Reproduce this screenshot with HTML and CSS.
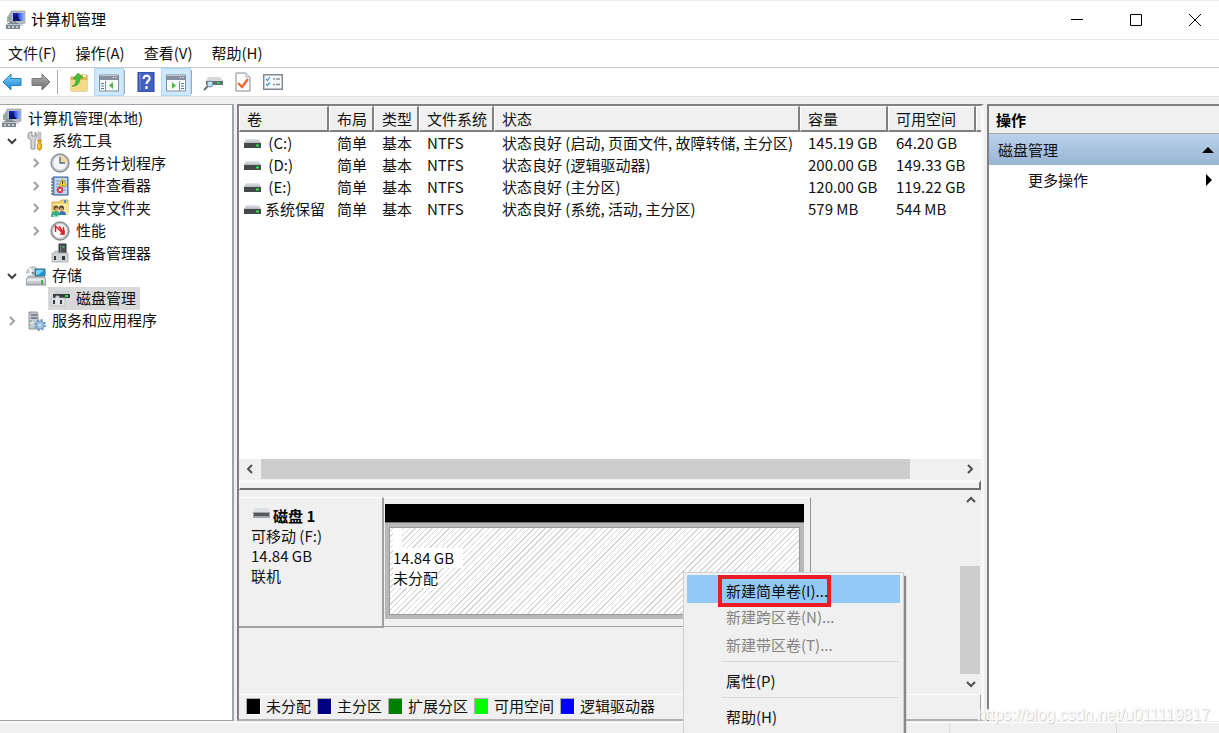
FILE: index.html
```html
<!DOCTYPE html>
<html lang="zh-CN">
<head>
<meta charset="utf-8">
<title>计算机管理</title>
<link rel="stylesheet" href="styles.css">
</head>
<body>
<svg class="defs" aria-hidden="true">
  <defs>
    <linearGradient id="metal" x1="0" y1="0" x2="0" y2="1"><stop offset="0" stop-color="#e4e7ea"/><stop offset="1" stop-color="#b5b9be"/></linearGradient>
    <linearGradient id="screen" x1="0" y1="0" x2="1" y2="0"><stop offset="0" stop-color="#0510a0"/><stop offset=".5" stop-color="#2a48ee"/><stop offset="1" stop-color="#8fb4ff"/></linearGradient>
    <linearGradient id="blue" x1="0" y1="0" x2="0" y2="1"><stop offset="0" stop-color="#7fd0fa"/><stop offset="1" stop-color="#1686d8"/></linearGradient>
    <linearGradient id="gray" x1="0" y1="0" x2="0" y2="1"><stop offset="0" stop-color="#b5b5b5"/><stop offset="1" stop-color="#6a6a6a"/></linearGradient>
    <symbol id="computer" viewBox="0 0 20 20">
      <path d="M1 7l4-5v10H1z" fill="#a6abb0"/><path d="M2 8h2v1H2z" fill="#41c64a"/>
      <path d="M5 1h14v12l-3 1H7l-2-1z" fill="#b9bdc5" stroke="#8b9099" stroke-width=".6"/>
      <path d="M7 3h11v8H7z" fill="url(#screen)"/><path d="M7 11c1-4 3-7 4-8l1 4c1 2 2 3 3 4z" fill="#0b1468"/>
      <path d="M14 14h3v2h-3z" fill="#d6d8dc"/>
      <path d="M0 15l2-2h10l2 2v4H0z" fill="#7b868f"/><path d="M1 14.500h12" stroke="#c3cbd2"/><path d="M2 17h2M6 17h2M10 17h2" stroke="#dfe5ea" stroke-width="1.500"/><path d="M4 13v-1h6v1" fill="none" stroke="#69737b"/>
    </symbol>
    <symbol id="tools" viewBox="0 0 20 20">
      <path d="M4 1L2 3v4l3 2v9h4V9l2-3V3L9 1v4H6V1z" fill="#d4d7d8" stroke="#868b8e" stroke-width=".9"/>
      <path d="M12 1h3v8h-3z" fill="#c5c8ca" stroke="#a0a4a6" stroke-width=".4"/><path d="M11.500 9h4l-1 3 1 1v5c-1 1.500-3 1.500-4 0v-5l1-1z" fill="#f3ab13" stroke="#c98106" stroke-width=".7"/><path d="M13 13v4" stroke="#ffe17d"/>
    </symbol>
    <symbol id="clock" viewBox="0 0 20 20"><circle cx="10" cy="10" r="9.200" fill="#a7abb0" stroke="#73777c" stroke-width=".8"/><circle cx="10" cy="10" r="7.300" fill="#f2f4f5" stroke="#d3d7da"/><path d="M10 10V3a7 7 0 0 1 7 7z" fill="#f6d797"/><path d="M10 4v6h5" fill="none" stroke="#566c89" stroke-width="1.400"/></symbol>
    <symbol id="event" viewBox="0 0 20 20"><path d="M3 1h15v18H3z" fill="#8badd6" stroke="#385d9a"/><path d="M5 2h12v16H5z" fill="#c4d8f1"/><path d="M6 5h10M6 8h10M6 11h10M6 14h10" stroke="#7898c4"/><path d="M1 3h3M1 6h3M1 9h3M1 12h3M1 15h3M1 18h3" stroke="#747b87" stroke-width="1.300"/><path d="M12.500 3l4 7H9z" fill="#ffdc17" stroke="#ca9c00" stroke-width=".7"/><path d="M12.500 5v3M12.500 9v.6" stroke="#322a00" stroke-width=".9"/><circle cx="10" cy="14" r="3.200" fill="#dc3545"/><path d="M8.700 12.700l2.600 2.600M11.300 12.700l-2.600 2.600" stroke="#fff"/></symbol>
    <symbol id="shared" viewBox="0 0 20 20"><path d="M2 4h8l1-2h7v14H2z" fill="#f5d46f" stroke="#c79e35" stroke-width=".8"/><path d="M4 6h14v10H4z" fill="#ffe799"/><path d="M14 2h2v3h-2z" fill="#568bd3"/><circle cx="6" cy="10" r="2.500" fill="#63452c"/><circle cx="11.500" cy="10" r="2.500" fill="#534131"/><circle cx="6.500" cy="11" r="1.500" fill="#d9aa7b"/><circle cx="11.500" cy="11" r="1.500" fill="#d9aa7b"/><path d="M1 19c0-4 2-6 5-6s4 2 4 5z" fill="#2fae82"/><path d="M9 17c0-3 1-4 3-4s4 1 4 4z" fill="#3577ad"/><path d="M3 17l3 2 4-2" fill="none" stroke="#a5e4c5" stroke-width="1.200"/></symbol>
    <symbol id="perf" viewBox="0 0 20 20"><circle cx="10" cy="10" r="9.200" fill="#a7aaac" stroke="#6f7376" stroke-width=".8"/><circle cx="10" cy="10" r="7.400" fill="#fff" stroke="#c5c8ca"/><path d="M5.500 11V5l8 8V6" fill="none" stroke="#dd2024" stroke-width="1.500"/><path d="M9 5l5 8M10 13h4V9" fill="none" stroke="#dd2024" stroke-width="1.500"/></symbol>
    <symbol id="device" viewBox="0 0 20 20"><path d="M9 1h7v10H9z" fill="#505457" stroke="#292c2e"/><path d="M10.500 2v8" stroke="#7b8286"/><path d="M12.500 4h2" stroke="#24da4e" stroke-width="1.600"/><path d="M2 10h3V8h3v2h10v9H2z" fill="#d0d3d4" stroke="#a2a6a8" stroke-width=".8"/><path d="M4 13h2v4H4zM12 13h3v4h-3z" fill="#34383a"/></symbol>
    <symbol id="storage" viewBox="0 0 20 20"><circle cx="7" cy="7" r="6.200" fill="#d3d7d9" stroke="#93989b" stroke-width=".7"/><path d="M7 7L3 2M7 7l5-4M7 7L1 9" stroke="#f8faff" stroke-width="2"/><circle cx="7" cy="7" r="1.500" fill="#888f93"/><path d="M9 3h10v7H9z" fill="#1f98d8" stroke="#376c89"/><path d="M10 4h8l-6 5h-2z" fill="#7dd3f6"/><path d="M0 13l3-2h15l2 2v6H0z" fill="url(#metal)" stroke="#777c80" stroke-width=".8"/><path d="M1 14h17" stroke="#f9fbfc"/><path d="M15 14h2v4h-2z" fill="#39b83d"/></symbol>
    <symbol id="diskmgmt" viewBox="0 0 20 20"><path d="M3 6l3-3h12l2 3z" fill="#cfd2d5"/><path d="M3 6h17v4H3z" fill="#383c3f"/><path d="M15 8h3" stroke="#23df4f" stroke-width="2"/><path d="M1 10h5V8h3v2h6v8H1z" fill="#e1e3e4" stroke="#b8bcbe" stroke-width=".8"/><path d="M3 12h2v4H3zM10 12h2v4h-2z" fill="#34383a"/></symbol>
    <symbol id="services" viewBox="0 0 20 20"><path d="M3 1h8l1 2v15H3z" fill="#c5cbd0" stroke="#7a8288" stroke-width=".8"/><path d="M5 4h6M5 7h6" stroke="#657078" stroke-width="1.500"/><path d="M4 12h7" stroke="#fff"/><path d="M4 10h2" stroke="#43ba4d"/><circle cx="14" cy="14" r="4.800" fill="none" stroke="#6d9cc8" stroke-width="2.400" stroke-dasharray="2 1.770"/><circle cx="14" cy="14" r="4" fill="#a7c8e4" stroke="#6d98bf"/><circle cx="14" cy="14" r="1.500" fill="#fff" stroke="#6d98bf" stroke-width=".6"/></symbol>
    <symbol id="drive" viewBox="0 0 17 10"><path d="M2 0h13l2 4H0z" fill="url(#metal)"/><path d="M0 4h17v5H0z" fill="#454849"/><path d="M12 6.500h3" stroke="#27e54d" stroke-width="2"/></symbol>
    <symbol id="removable" viewBox="0 0 17 10"><path d="M2 0h13l2 4H0z" fill="#dce0e4"/><path d="M0 4h17v6H0z" fill="#a2a5a7"/><path d="M1 6.500h15" stroke="#55585a" stroke-width="3"/></symbol>
    <symbol id="arrow" viewBox="0 0 20 18"><path d="M1 9l8-8v4.500h10v7H9V17z" stroke="currentColor" stroke-linejoin="round"/></symbol>
    <symbol id="up" viewBox="0 0 20 20"><path d="M2 5h6l2-2h8v16H2z" fill="#e7bb54" stroke="#c49636" stroke-width=".8"/><path d="M2 8h16v11H2z" fill="#f5da88"/><path d="M14 4h3" stroke="#fff8cd" stroke-width="2"/><path d="M3 14c3 0 4-3 4-7H4l5-6 5 5h-3c0 5-3 9-8 8z" fill="#44c13b" stroke="#28982b" stroke-width=".6"/></symbol>
    <symbol id="panel-left" viewBox="0 0 20 18"><path d="M.5 1h19v16H.5z" fill="#f8fafc" stroke="#858d99"/><path d="M1 2h18v4H1z" fill="#8790a0"/><path d="M14 3.500h1M16.500 3.500h1" stroke="#fff"/><path d="M6.500 7v10" stroke="#858d99"/><path d="M2 9.500h3M2 12h3M2 14.500h3" stroke="#417bb7"/><path d="M14 8v7l-4-3.500z" fill="#4fb93e"/></symbol>
    <symbol id="panel-right" viewBox="0 0 20 18"><path d="M.5 1h19v16H.5z" fill="#f8fafc" stroke="#858d99"/><path d="M1 2h18v4H1z" fill="#8790a0"/><path d="M14 3.500h1M16.500 3.500h1" stroke="#fff"/><path d="M13.500 7v10" stroke="#858d99"/><path d="M15 9.500h3M15 12h3M15 14.500h3" stroke="#417bb7"/><path d="M6 8v7l4-3.500z" fill="#4fb93e"/></symbol>
    <symbol id="help" viewBox="0 0 18 20"><path d="M1 0h16v20H1z" fill="#4260c0" stroke="#29439b"/><path d="M3 1v18" stroke="#7892dc"/><path d="M6.500 7c0-5 7-4 6 0-.6 2-3 2-3 5M9.500 14v3" fill="none" stroke="#fff" stroke-width="2.200"/></symbol>
    <symbol id="rescan" viewBox="0 0 20 18"><path d="M5 4h12l3 4H3z" fill="#d4d8db"/><path d="M3 8h17v4H3z" fill="#666d72"/><path d="M14 10h3" stroke="#24cc4d" stroke-width="2"/><circle cx="7" cy="11" r="3" fill="#bfe1f6" stroke="#73899a"/><path d="M5 13l-4 4" stroke="#5f7385" stroke-width="2"/></symbol>
    <symbol id="check" viewBox="0 0 16 20"><path d="M1 1h10l4 4v14H1z" fill="#fff" stroke="#85898d"/><path d="M11 1v4h4" fill="#eee" stroke="#a5a8aa"/><path d="M3 11l4 4 6-8" fill="none" stroke="#f06330" stroke-width="2.400"/></symbol>
    <symbol id="list" viewBox="0 0 20 16"><path d="M.7.7h18.600v14.600H.7z" fill="#f7f9fa" stroke="#81888d" stroke-width="1.400"/><path d="M3 5l1.500 1.500L7 3M3 10l1.500 1.500L7 8.500" fill="none" stroke="#4697d5" stroke-width="1.200"/><path d="M10 5h2M13 5h4M10 10.500h2M13 10.500h4" stroke="#8b9399" stroke-width="1.300"/></symbol>
    <symbol id="chevron" viewBox="0 0 12 12"><path d="M2 4l4 4 4-4" fill="none" stroke="currentColor" stroke-width="2"/></symbol>
  </defs>
</svg>

<header class="titlebar">
  <svg class="icon"><use href="#computer"/></svg>
  <h1 class="title">计算机管理</h1>
  <div class="window-buttons">
    <button aria-label="最小化"><svg viewBox="0 0 12 12"><path d="M0 5.500h12"/></svg></button>
    <button aria-label="最大化"><svg viewBox="0 0 12 12"><path d="M.5.5h11v11H.5z"/></svg></button>
    <button aria-label="关闭"><svg viewBox="0 0 12 12"><path d="M0 0l12 12M12 0L0 12"/></svg></button>
  </div>
</header>

<nav class="menubar">
  <button>文件(F)</button><button>操作(A)</button><button>查看(V)</button><button>帮助(H)</button>
</nav>

<div class="toolbar">
  <button class="back" aria-label="后退"><svg><use href="#arrow"/></svg></button>
  <button class="forward" aria-label="前进"><svg><use href="#arrow"/></svg></button>
  <span class="separator"></span>
  <button aria-label="上一级"><svg><use href="#up"/></svg></button>
  <button class="active" aria-label="控制台树"><svg><use href="#panel-left"/></svg></button>
  <span class="separator"></span>
  <button aria-label="帮助"><svg><use href="#help"/></svg></button>
  <button class="active" aria-label="操作窗格"><svg><use href="#panel-right"/></svg></button>
  <span class="separator"></span>
  <button aria-label="重新扫描"><svg><use href="#rescan"/></svg></button>
  <button aria-label="检查"><svg><use href="#check"/></svg></button>
  <button aria-label="列表"><svg><use href="#list"/></svg></button>
</div>

<main class="workspace">
  <aside class="tree-pane">
    <ul class="tree">
      <li class="root"><svg class="icon"><use href="#computer"/></svg><span>计算机管理(本地)</span></li>
      <li class="level1"><svg class="chevron open"><use href="#chevron"/></svg><svg class="icon"><use href="#tools"/></svg><span>系统工具</span></li>
      <li class="level2"><svg class="chevron"><use href="#chevron"/></svg><svg class="icon"><use href="#clock"/></svg><span>任务计划程序</span></li>
      <li class="level2"><svg class="chevron"><use href="#chevron"/></svg><svg class="icon"><use href="#event"/></svg><span>事件查看器</span></li>
      <li class="level2"><svg class="chevron"><use href="#chevron"/></svg><svg class="icon"><use href="#shared"/></svg><span>共享文件夹</span></li>
      <li class="level2"><svg class="chevron"><use href="#chevron"/></svg><svg class="icon"><use href="#perf"/></svg><span>性能</span></li>
      <li class="level2 leaf"><svg class="icon"><use href="#device"/></svg><span>设备管理器</span></li>
      <li class="level1"><svg class="chevron open"><use href="#chevron"/></svg><svg class="icon"><use href="#storage"/></svg><span>存储</span></li>
      <li class="level2 leaf"><div class="selected"><svg class="icon"><use href="#diskmgmt"/></svg><span>磁盘管理</span></div></li>
      <li class="level1"><svg class="chevron"><use href="#chevron"/></svg><svg class="icon"><use href="#services"/></svg><span>服务和应用程序</span></li>
    </ul>
  </aside>

  <section class="disk-pane">
    <div class="volumes">
      <table>
        <colgroup><col class="c-volume"><col class="c-short"><col class="c-short"><col class="c-fs"><col class="c-status"><col class="c-size"><col class="c-size"><col></colgroup>
        <thead><tr><th>卷</th><th>布局</th><th>类型</th><th>文件系统</th><th>状态</th><th>容量</th><th>可用空间</th><th></th></tr></thead>
        <tbody>
          <tr><td><svg class="drive"><use href="#drive"/></svg>&nbsp;(C:)</td><td>简单</td><td>基本</td><td>NTFS</td><td>状态良好 (启动, 页面文件, 故障转储, 主分区)</td><td>145.19 GB</td><td>64.20 GB</td><td></td></tr>
          <tr><td><svg class="drive"><use href="#drive"/></svg>&nbsp;(D:)</td><td>简单</td><td>基本</td><td>NTFS</td><td>状态良好 (逻辑驱动器)</td><td>200.00 GB</td><td>149.33 GB</td><td></td></tr>
          <tr><td><svg class="drive"><use href="#drive"/></svg>&nbsp;(E:)</td><td>简单</td><td>基本</td><td>NTFS</td><td>状态良好 (主分区)</td><td>120.00 GB</td><td>119.22 GB</td><td></td></tr>
          <tr><td><svg class="drive"><use href="#drive"/></svg>系统保留</td><td>简单</td><td>基本</td><td>NTFS</td><td>状态良好 (系统, 活动, 主分区)</td><td>579 MB</td><td>544 MB</td><td></td></tr>
        </tbody>
      </table>
      <div class="hscroll">
        <button aria-label="向左"><svg class="chevron left"><use href="#chevron"/></svg></button>
        <div class="track"><div class="thumb"></div></div>
        <button aria-label="向右"><svg class="chevron"><use href="#chevron"/></svg></button>
      </div>
    </div>
    <div class="splitter"></div>
    <div class="graphic">
      <div class="disk-area">
        <div class="disk-row">
          <div class="disk-info">
            <strong><svg class="drive"><use href="#removable"/></svg>磁盘 1</strong>
            <span>可移动 (F:)</span><span>14.84 GB</span><span>联机</span>
          </div>
          <div class="partition-box">
            <div class="partition-bar"></div>
            <div class="partition"><span class="blank"></span><span class="size">14.84 GB</span><span>未分配</span></div>
          </div>
        </div>
      </div>
      <div class="vscroll">
        <button aria-label="向上"><svg class="chevron up"><use href="#chevron"/></svg></button>
        <div class="track"><div class="thumb"></div></div>
        <button aria-label="向下"><svg class="chevron open"><use href="#chevron"/></svg></button>
      </div>
    </div>
    <ul class="legend">
      <li><i class="unallocated"></i>未分配</li><li><i class="primary"></i>主分区</li><li><i class="extended"></i>扩展分区</li><li><i class="free"></i>可用空间</li><li><i class="logical"></i>逻辑驱动器</li>
    </ul>
  </section>

  <aside class="actions">
    <h2>操作</h2>
    <button class="group">磁盘管理<svg viewBox="0 0 12 6"><path d="M0 6l6-6 6 6z"/></svg></button>
    <button class="more">更多操作<svg viewBox="0 0 6 12"><path d="M0 0l6 6-6 6z"/></svg></button>
  </aside>
</main>

<footer class="statusbar"><span></span><span></span></footer>

<div class="context-menu">
  <button class="highlight"><span>新建简单卷(I)...</span></button>
  <button disabled>新建跨区卷(N)...</button>
  <button disabled>新建带区卷(T)...</button>
  <hr>
  <button>属性(P)</button>
  <hr>
  <button>帮助(H)</button>
</div>
<div class="watermark">https://blog.csdn.net/u011119817</div>
</body>
</html>
```
FILE: styles.css
```css
* { box-sizing: border-box; }

body {
  margin: 0;
  height: 100vh;
  display: flex;
  flex-direction: column;
  position: relative;
  overflow: hidden;
  background: #f0f0f0;
  color: #111;
  font: 15px/20px "Noto Sans CJK SC", sans-serif;
}

button {
  border: 0;
  padding: 0;
  background: none;
  color: inherit;
  font: inherit;
}

ul { list-style: none; margin: 0; padding: 0; }
svg { display: block; flex: none; }
.defs { position: absolute; width: 0; height: 0; }
.icon { width: 20px; height: 20px; }
.chevron { width: 12px; height: 12px; color: #a0a0a0; transform: rotate(-90deg); }
.chevron.open { transform: none; color: #404040; }
.chevron.left { transform: rotate(90deg); }
.chevron.up { transform: rotate(180deg); }
.drive { width: 17px; height: 10px; }

.titlebar {
  display: flex;
  align-items: center;
  height: 40px;
  padding-left: 6px;
  gap: 5px;
  background: #fff;
  border-top: 1px solid #eee;
  border-bottom: 1px solid #e8e8e8;
}
.title { flex: 1; margin: 0; padding-bottom: 2px; font-size: 15px; font-weight: 400; color: #000; }
.window-buttons { display: flex; gap: 11px; }
.window-buttons button { width: 48px; height: 38px; display: grid; place-items: center; }
.window-buttons svg { width: 12px; height: 12px; fill: none; stroke: #000; }

.menubar {
  display: flex;
  gap: 19px;
  height: 28px;
  padding: 0 0 2px 8px;
  background: #fff;
  border-bottom: 1px solid #c3c9cf;
}

.toolbar {
  display: flex;
  align-items: center;
  height: 29px;
  background: #fff;
  border-bottom: 1px solid #e3e3e3;
}
.toolbar button { width: 30px; height: 28px; display: grid; place-items: center; }
.toolbar svg { width: 20px; height: 20px; }
.toolbar .back { width: 24px; color: #2981bd; fill: url(#blue); }
.toolbar .forward { width: 33px; color: #777; fill: url(#gray); }
.toolbar .forward svg { transform: scaleX(-1); }
.toolbar .active { background: #cde8ff; border: 1px solid #b0d9f8; padding-top: 2px; }
.toolbar .separator { width: 1px; height: 24px; margin-right: 6px; background: #a9a9a9; }

.workspace {
  flex: 1;
  min-height: 0;
  display: grid;
  grid-template-columns: 234px minmax(0, 1fr) 232px;
  gap: 3px;
  margin-top: 7px;
}

.tree-pane {
  background: #fff;
  border: 2px solid #a0a5ad;
  border-width: 1px 2px 1px 0;
}
.tree {
  display: grid;
  grid-auto-rows: 1fr;
  height: 225px;
  margin-top: 2px;
}
.tree li, .selected { display: flex; align-items: center; gap: 6px; white-space: nowrap; }
.tree li { padding-left: 2px; }
.tree .level1 { padding-left: 6px; }
.tree .level1 .chevron { margin-right: 2px; }
.tree .level2 { padding-left: 30px; }
.tree .level2 .chevron { margin-right: 2px; }
.tree .leaf { padding-left: 50px; }
.tree span { padding-bottom: 1px; }
.selected { align-self: stretch; margin-left: -2px; padding: 0 4px 0 2px; background: #d9d9d9; }

.disk-pane {
  min-width: 0;
  display: flex;
  flex-direction: column;
  border: 2px solid #808080;
  border-right: 3px solid #f8f8f8;
  border-bottom-color: #b0b0b0;
}
.volumes { flex: 1; min-height: 0; display: flex; flex-direction: column; justify-content: space-between; background: #fff; overflow: hidden; }
table { width: 100%; height: 115px; table-layout: fixed; border-collapse: separate; border-spacing: 0; }
.c-volume { width: 90px; }
.c-short { width: 45px; }
.c-fs { width: 75px; }
.c-status { width: 306px; }
.c-size { width: 88px; }
th {
  height: 26px;
  padding: 0 0 0 7px;
  background: #f0f0f0;
  border: 1px solid #fff;
  border-right: 2px solid #808080;
  border-bottom: 2px solid #808080;
  text-align: left;
  font-weight: 400;
}
td { padding: 0 0 1px 8px; white-space: nowrap; }
th:last-child, td:last-child { padding: 0; border-right: 0; }
td:first-child { padding-left: 5px; }
td .drive { display: inline-block; margin-right: 4px; }

.hscroll { display: flex; height: 21px; background: #f0f0f0; }
.hscroll button, .vscroll button { display: grid; place-items: center; width: 22px; height: 20px; }
.hscroll .chevron, .vscroll .chevron { color: #505050; }
.track { flex: 1; }
.hscroll .thumb { width: 93%; height: 20px; background: #cdcdcd; }
.splitter { height: 10px; border: 1px solid #fff; border-top: 3px solid #f8f8f8; border-bottom: 2px solid #707070; border-right: 2px solid #707070; background: #f0f0f0; }

.graphic { display: flex; height: 204px; }
.disk-area { flex: 1; min-width: 0; padding-top: 7px; }
.disk-row { display: flex; height: 131px; }
.disk-info {
  width: 145px;
  display: flex;
  flex-direction: column;
  padding: 8px 0 0 12px;
  border: 1px solid #fff;
  border-right: 2px solid #a0a0a0;
  border-bottom: 2px solid #a0a0a0;
  border-left: 0;
}
.disk-info strong { display: flex; gap: 3px; padding-left: 2px; color: #000; }
.disk-info .drive { margin-top: 2px; }
.partition-box {
  width: 427px;
  display: flex;
  flex-direction: column;
  height: 130px;
  padding: 6px 6px 7px 1px;
  border-top: 1px solid #fff;
  border-right: 1px solid #909090;
  border-bottom: 1px solid #a0a0a0;
}
.partition-bar { height: 19px; background: #000; border-bottom: 1px solid #777; }
.partition {
  flex: 1;
  display: flex;
  flex-direction: column;
  align-items: flex-start;
  padding: 1px 0 0 4px;
  border: 4px solid #b8b8b8;
  border-bottom-width: 5px;
  outline: 1px solid #999;
  outline-offset: -5px;
  background: repeating-linear-gradient(135deg, #fff 0 3px, #d4d4d4 3px 4px) padding-box;
}
.partition span { background: #fff; }
.partition .blank { width: 9px; height: 20px; }
.partition .size { padding-right: 9px; }

.vscroll { width: 21px; display: flex; flex-direction: column; }
.vscroll .track { display: flex; align-items: flex-end; }
.vscroll .thumb { width: 20px; height: 66%; background: #cdcdcd; }

.legend { display: flex; height: 25px; align-items: center; gap: 6px; padding: 0 0 2px 7px; border-top: 1px solid #fff; border-right: 1px solid #a0a0a0; }
.legend li { display: flex; align-items: center; gap: 5px; white-space: nowrap; }
.legend i { width: 15px; height: 17px; border: 1px solid #aaa; border-right-color: #fff; border-bottom-color: #fff; }
.unallocated { background: #000; }
.primary { background: #000080; }
.extended { background: #008000; }
.free { background: #00ff00; }
.logical { background: #0000ff; }

.actions { background: #fff; border-top: 2px solid #808080; border-left: 2px solid #808080; }
.actions h2 { margin: 0; height: 28px; padding: 4px 0 0 7px; background: #f0f0f0; border-bottom: 1px solid #aaa; color: #000; font-size: 15px; line-height: 20px; font-weight: 700; }
.actions button { width: 100%; display: flex; align-items: center; justify-content: space-between; }
.actions .group { height: 31px; padding: 0 5px 0 9px; background: linear-gradient(#bad2ea, #99b4d3); }
.group svg { width: 12px; height: 6px; }
.actions .more { height: 29px; padding: 0 7px 0 39px; }
.more svg { width: 6px; height: 12px; }

.statusbar { height: 11px; margin-top: 1px; display: flex; justify-content: flex-end; border-top: 1px solid #fff; }
.statusbar span { width: 103px; border-left: 1px solid #dcdcdc; }
.statusbar span:first-child { width: 167px; }

.context-menu {
  position: absolute;
  left: 683px;
  top: 572px;
  width: 221px;
  height: 180px;
  padding: 2px 3px;
  display: flex;
  flex-direction: column;
  background: #f0f0f0;
  border: 1px solid #d0d0d0;
  box-shadow: 2px 4px 1px #888;
}
.context-menu button { height: 28px; flex: none; text-align: left; padding-left: 39px; }
.context-menu button:disabled { color: #848484; }
.context-menu .highlight { background: #91c9f7; padding-left: 31px; }
.highlight span { display: block; width: 113px; height: 32px; padding: 2px 0 0 4px; border: 4px solid #ed1c24; white-space: nowrap; }
.context-menu hr { width: 177px; margin: 2px 0 5px 35px; border: 0; border-top: 1px solid #d8d8d8; }

.watermark {
  position: absolute;
  right: 9px;
  bottom: 8px;
  color: #fff;
  text-shadow: 1px 1px 1px #ccc, 0 0 1px #ddd;
  font: 16px/20px "Liberation Sans", sans-serif;
}
```
